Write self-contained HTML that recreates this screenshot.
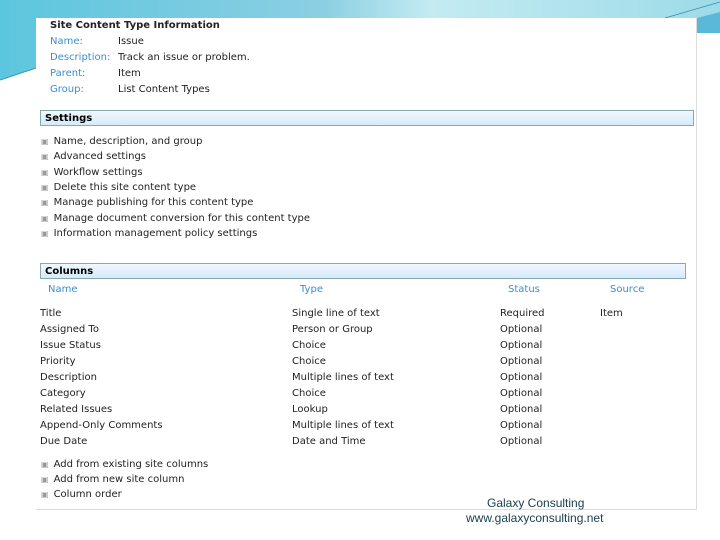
<!DOCTYPE html><html><head><style>
body{margin:0;width:720px;height:540px;position:relative;overflow:hidden;background:#fff;font-family:"DejaVu Sans","Liberation Sans",sans-serif;}
.box{position:absolute;left:36px;top:18px;width:660px;height:491px;background:#fff;border-right:1px solid #ddd;border-bottom:1px solid #ddd;}
.t{position:absolute;font-size:10px;color:#222;white-space:nowrap;}
.l{color:#3a8fd0;}
.h{position:absolute;left:4px;width:654px;height:16px;background:linear-gradient(#f0f8ff,#d6eafa);border:1px solid #8aa;font-weight:bold;font-size:10px;line-height:16px;padding-left:4px;box-sizing:border-box;}
.b{font-size:8px;color:#999;margin-right:5px;}
.f{position:absolute;font-family:"Liberation Sans Narrow","Liberation Sans",sans-serif;font-size:12px;color:#1c4050;}
</style></head><body>
<svg width="720" height="540" style="position:absolute;left:0;top:0">
<defs><linearGradient id="g" x1="0" x2="1" y1="0" y2="0"><stop offset="0" stop-color="#5cc6de"/><stop offset="0.45" stop-color="#8ccfe2"/><stop offset="0.6" stop-color="#c4ebf2"/><stop offset="1" stop-color="#9cdbe8"/></linearGradient></defs>
<polygon points="0,0 720,0 720,33 697,33 697,18 36,18 36,68 0,80" fill="url(#g)"/>
<polygon points="697,18 720,12 720,33 697,33" fill="#5ab8d8"/>
<line x1="0" y1="80" x2="36" y2="68" stroke="#3a9aa8" stroke-width="1"/>
<line x1="665" y1="18" x2="720" y2="2" stroke="#3a8aa8" stroke-width="0.7"/>
</svg>
<div class="box">
<div class="t" style="left:14px;top:2px;font-weight:bold">Site Content Type Information</div>
<div class="t l" style="left:14px;top:18px">Name:</div><div class="t" style="left:82px;top:18px">Issue</div>
<div class="t l" style="left:14px;top:34px">Description:</div><div class="t" style="left:82px;top:34px">Track an issue or problem.</div>
<div class="t l" style="left:14px;top:50px">Parent:</div><div class="t" style="left:82px;top:50px">Item</div>
<div class="t l" style="left:14px;top:66px">Group:</div><div class="t" style="left:82px;top:66px">List Content Types</div>
<div class="h" style="top:92px">Settings</div>
<div class="t" style="left:5px;top:118px"><span class="b">▣</span>Name, description, and group</div>
<div class="t" style="left:5px;top:133px"><span class="b">▣</span>Advanced settings</div>
<div class="t" style="left:5px;top:149px"><span class="b">▣</span>Workflow settings</div>
<div class="t" style="left:5px;top:164px"><span class="b">▣</span>Delete this site content type</div>
<div class="t" style="left:5px;top:179px"><span class="b">▣</span>Manage publishing for this content type</div>
<div class="t" style="left:5px;top:195px"><span class="b">▣</span>Manage document conversion for this content type</div>
<div class="t" style="left:5px;top:210px"><span class="b">▣</span>Information management policy settings</div>
<div class="h" style="top:245px;width:646px">Columns</div>
<div class="t l" style="left:12px;top:266px">Name</div><div class="t l" style="left:264px;top:266px">Type</div><div class="t l" style="left:472px;top:266px">Status</div><div class="t l" style="left:574px;top:266px">Source</div>
<div class="t" style="left:4px;top:288px;line-height:16px">Title<br>Assigned To<br>Issue Status<br>Priority<br>Description<br>Category<br>Related Issues<br>Append-Only Comments<br>Due Date</div>
<div class="t" style="left:256px;top:288px;line-height:16px">Single line of text<br>Person or Group<br>Choice<br>Choice<br>Multiple lines of text<br>Choice<br>Lookup<br>Multiple lines of text<br>Date and Time</div>
<div class="t" style="left:464px;top:288px;line-height:16px">Required<br>Optional<br>Optional<br>Optional<br>Optional<br>Optional<br>Optional<br>Optional<br>Optional</div>
<div class="t" style="left:564px;top:288px;line-height:16px">Item</div>
<div class="t" style="left:5px;top:441px"><span class="b">▣</span>Add from existing site columns</div>
<div class="t" style="left:5px;top:456px"><span class="b">▣</span>Add from new site column</div>
<div class="t" style="left:5px;top:471px"><span class="b">▣</span>Column order</div>
</div>
<div class="f" style="left:487px;top:496px">Galaxy Consulting</div>
<div class="f" style="left:466px;top:511px">www.galaxyconsulting.net</div>
</body></html>
